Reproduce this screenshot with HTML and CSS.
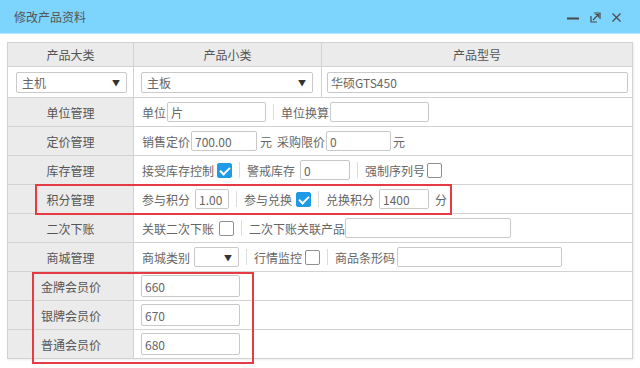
FILE: index.html
```html
<!DOCTYPE html>
<html lang="zh-CN">
  <head>
    <meta charset="UTF-8" />
    <meta name="viewport" content="width=device-width, initial-scale=1.0" />
    <title>修改产品资料</title>
    <link rel="stylesheet" href="styles.css">
  </head>
  <body>
    <div class="dialog">
      <div class="titlebar">
        <span class="title">修改产品资料</span>
        <div class="win-btns">
          <svg class="win-btn" width="14" height="14" viewBox="0 0 14 14"><path d="M1 7.5h12" stroke="#4a4a4a" stroke-width="2"/></svg>
          <svg class="win-btn" width="11" height="11" viewBox="0 0 11 11"><path d="M1 4v6h6M4 1h6v6" fill="none" stroke="#4a4a4a" stroke-width="1.2"/><path d="M3 8l5.5-5.5M5.5 2.5h3v3" fill="none" stroke="#4a4a4a" stroke-width="1.2"/></svg>
          <svg class="win-btn" width="11" height="11" viewBox="0 0 11 11"><path d="M1.5 1.5l8 8M9.5 1.5l-8 8" stroke="#4a4a4a" stroke-width="1.2"/></svg>
        </div>
      </div>

      <div class="body">
        <table class="form">
          <colgroup>
            <col class="col-label" />
            <col class="col-sub" />
            <col class="col-model" />
          </colgroup>
          <tr class="head">
            <th>产品大类</th>
            <th>产品小类</th>
            <th>产品型号</th>
          </tr>
          <tr class="pick">
            <td class="pick-a"><div class="select sel-cat"><span>主机</span><i>▼</i></div></td>
            <td class="pick-b"><div class="select sel-sub"><span>主板</span><i>▼</i></div></td>
            <td class="pick-c"><input class="field in-model" type="text" value="华硕GTS450" /></td>
          </tr>
          <tr>
            <th class="label">单位管理</th>
            <td colspan="2">
              <div class="line">
                <span>单位</span><input class="field in-unit" type="text" value="片" />
                <span class="sep"></span>
                <span>单位换算</span><input class="field in-conv" type="text" value="" />
              </div>
            </td>
          </tr>
          <tr>
            <th class="label">定价管理</th>
            <td colspan="2">
              <div class="line">
                <span>销售定价</span><input class="field in-price" type="text" value="700.00" />
                <span class="unit">元</span>
                <span class="after-unit">采购限价</span><input class="field in-limit" type="text" value="0" />
                <span class="unit unit-tight">元</span>
              </div>
            </td>
          </tr>
          <tr>
            <th class="label">库存管理</th>
            <td colspan="2">
              <div class="line">
                <span>接受库存控制</span><span class="check on cb-stock"></span>
                <span class="sep"></span>
                <span>警戒库存</span><input class="field in-warn" type="text" value="0" />
                <span class="sep"></span>
                <span>强制序列号</span><span class="check cb-serial"></span>
              </div>
            </td>
          </tr>
          <tr>
            <th class="label">积分管理</th>
            <td colspan="2">
              <div class="line">
                <span>参与积分</span><input class="field in-points" type="text" value="1.00" />
                <span class="sep"></span>
                <span>参与兑换</span><span class="check on cb-swap"></span>
                <span class="sep"></span>
                <span>兑换积分</span><input class="field in-swap" type="text" value="1400" />
                <span class="unit unit-wide">分</span>
              </div>
            </td>
          </tr>
          <tr>
            <th class="label">二次下账</th>
            <td colspan="2">
              <div class="line">
                <span>关联二次下账</span><span class="check cb-link"></span>
                <span class="sep"></span>
                <span>二次下账关联产品</span><input class="field in-link" type="text" value="" />
              </div>
            </td>
          </tr>
          <tr>
            <th class="label">商城管理</th>
            <td colspan="2">
              <div class="line">
                <span>商城类别</span><div class="select sel-mall"><span></span><i>▼</i></div>
                <span class="sep"></span>
                <span>行情监控</span><span class="check cb-watch"></span>
                <span class="sep"></span>
                <span>商品条形码</span><input class="field in-code" type="text" value="" />
              </div>
            </td>
          </tr>
          <tr class="member">
            <th class="label">金牌会员价</th>
            <td colspan="2"><input class="field in-member" type="text" value="660" /></td>
          </tr>
          <tr class="member">
            <th class="label">银牌会员价</th>
            <td colspan="2"><input class="field in-member" type="text" value="670" /></td>
          </tr>
          <tr class="member">
            <th class="label">普通会员价</th>
            <td colspan="2"><input class="field in-member" type="text" value="680" /></td>
          </tr>
        </table>

        <div class="mark mark-points"></div>
        <div class="mark mark-member"></div>
      </div>
    </div>
  </body>
</html>
```

FILE: styles.css
```css
* {
  box-sizing: border-box;
}
body {
  margin: 0;
  background: #fff;
  font-family: "Noto Sans CJK SC", "Liberation Sans", sans-serif;
  font-size: 12px;
  color: #666;
}
.dialog {
  width: 640px;
  height: 368px;
  overflow: hidden;
}
.titlebar {
  height: 34px;
  background: #7dd4fd;
  border-bottom: 1px solid #b6e6fc;
  display: flex;
  align-items: center;
  justify-content: space-between;
  padding: 0 18px 0 14px;
}
.title {
  color: #555;
  font-size: 12px;
}
.win-btns {
  display: flex;
  align-items: center;
  gap: 10px;
  margin-top: 2px;
}
.body {
  position: relative;
  padding: 8px 8px 0 7px;
}
.form {
  border-collapse: collapse;
  width: 625px;
  table-layout: fixed;
  border: 1px solid #cbcbcb;
  box-shadow: 1px 1px 2px rgba(0, 0, 0, 0.08);
}
.col-label {
  width: 126px;
}
.col-sub {
  width: 188px;
}
.col-model {
  width: 311px;
}
.form th,
.form td {
  border: 1px solid #d2d2d2;
  padding: 0;
  height: 29px;
}
.form th {
  background: #ebebeb;
  font-weight: normal;
  color: #555;
}
.head th {
  height: 24px;
  font-size: 12px;
}
.pick td {
  height: 31px;
}
.pick-a {
  padding-left: 8px !important;
}
.pick-b {
  padding-left: 7px !important;
}
.pick-c {
  padding-left: 5px !important;
}
.form td {
  padding-left: 8px;
}
.label {
  text-align: center;
  font-size: 12px;
}
.member .label {
  text-align: left;
  padding-left: 33px;
}
.member td {
  padding-left: 7px;
}
.line {
  display: flex;
  align-items: center;
  white-space: nowrap;
}
.field {
  height: 20px;
  border: 1px solid #c9c9c9;
  border-radius: 2px;
  padding: 0 3px;
  font-family: inherit;
  font-size: 12px;
  color: #666;
  background: #fff;
  outline: none;
  display: block;
  margin-left: 1px;
}
.select {
  height: 21px;
  border: 1px solid #c9c9c9;
  border-radius: 2px;
  display: flex;
  align-items: center;
  justify-content: space-between;
  padding: 0 6px 0 5px;
  color: #666;
  background: #fff;
}
.select i {
  font-style: normal;
  font-size: 8px;
  color: #333;
}
.sel-cat {
  width: 111px;
}
.sel-sub {
  width: 172px;
}
.sel-mall {
  width: 45px;
  height: 20px;
  margin-left: 4px;
}
.in-model {
  width: 301px;
  height: 21px;
  margin-left: 0;
}
.in-unit,
.in-conv {
  width: 99px;
}
.in-price {
  width: 66px;
}
.in-limit {
  width: 65px;
}
.in-warn {
  width: 50px;
  margin-left: 5px;
}
.in-points {
  width: 34px;
  margin-left: 5px;
}
.in-swap {
  width: 50px;
  margin-left: 5px;
}
.in-link {
  width: 166px;
  margin-left: 0;
}
.in-code {
  width: 165px;
  margin-left: 2px;
}
.in-member {
  width: 99px;
  height: 22px;
  margin-left: 0;
}
.unit {
  margin-left: 3px;
}
.unit-tight {
  margin-left: 2px;
}
.unit-wide {
  margin-left: 6px;
}
.after-unit {
  margin-left: 5px;
}
.sep {
  width: 1px;
  height: 16px;
  background: #dcdcdc;
  margin: 0 7px;
}
.check {
  width: 15px;
  height: 15px;
  border: 1px solid #8f8f8f;
  border-radius: 2px;
  background: #fff;
  position: relative;
}
.check.on {
  border-color: #1f9ae6;
  background: #1f9ae6;
}
.check.on::after {
  content: "";
  position: absolute;
  left: 4px;
  top: 1px;
  width: 4px;
  height: 8px;
  border: solid #fff;
  border-width: 0 2px 2px 0;
  transform: rotate(45deg);
}
.cb-stock {
  margin-left: 3px;
}
.cb-serial {
  margin-left: 2px;
}
.cb-swap {
  margin-left: 4px;
}
.cb-link {
  margin-left: 5px;
}
.cb-watch {
  margin-left: 3px;
}
.mark {
  position: absolute;
  border: 2px solid #e63b42;
}
.mark-points {
  left: 35px;
  top: 150px;
  width: 417px;
  height: 31px;
}
.mark-member {
  left: 32px;
  top: 238px;
  width: 222px;
  height: 92px;
}
```
